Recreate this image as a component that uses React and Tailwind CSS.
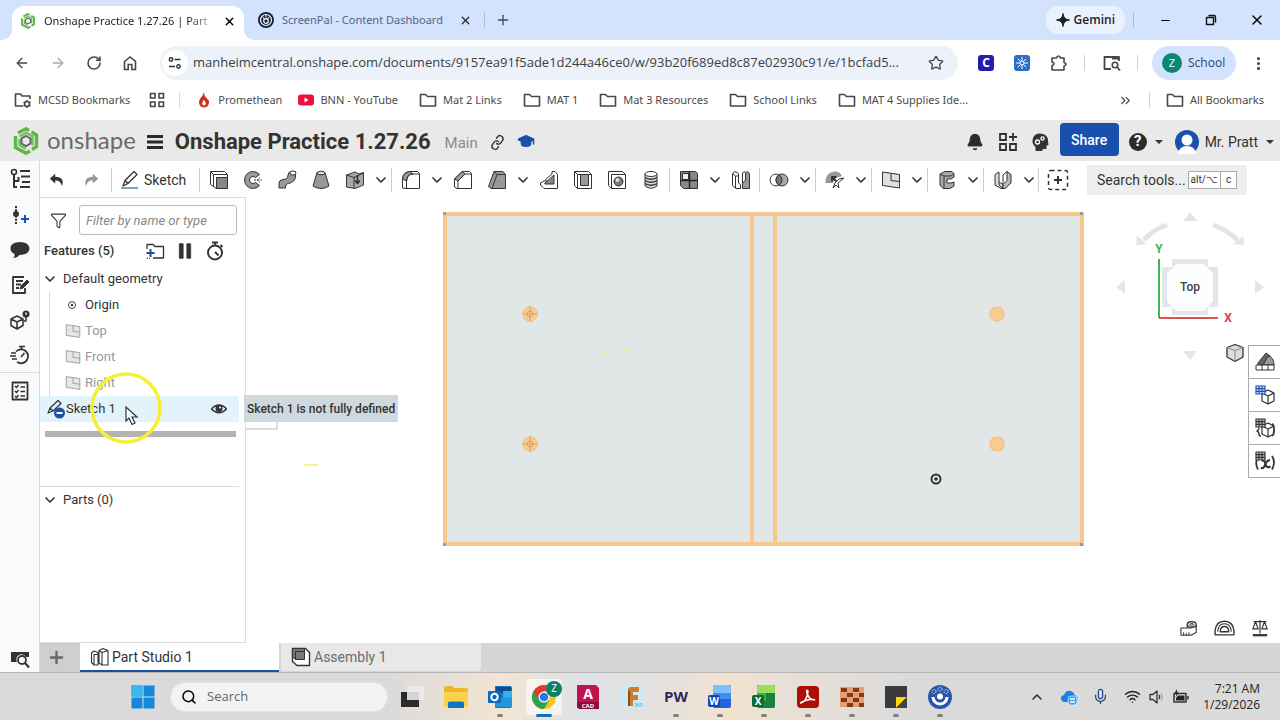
import { ArrowLeft, ArrowRight, RotateCw, Star, Plus, X, Minus, Search, Pause, ChevronDown, ChevronUp, Mic, Wifi, Link, Bell, EllipsisVertical, ChevronsRight, GraduationCap, Funnel } from "lucide-react";

const INK = "#333";

const Svg = ({ box = 20, className = "size-5", children }) => (
  <svg viewBox={`0 0 ${box} ${box}`} className={`shrink-0 ${className}`} fill="none" stroke={INK} strokeLinejoin="round" aria-hidden="true">
    {children}
  </svg>
);

const OnshapeMark = ({ className }) => (
  <svg viewBox="0 0 26 28" className={`shrink-0 ${className}`} fill="none" aria-hidden="true">
    <path d="M5 6 13 1.800 16 3.500M18.500 5 23.500 8V19.500L19 22.500" stroke="#5fb546" strokeWidth="3.400" />
    <path d="M2.500 9V20.500L13 26.200 17 24" stroke="#5fb546" strokeWidth="3.400" />
    <path d="M6.500 9.500 13 5.800 19.500 9.500V18.500M6.500 12V18L13 22" stroke="#74c25c" strokeWidth="2.400" />
    <path d="M13 9 17.500 11.500V16.500L13 19 8.500 16.500V11.500Z" stroke="#666" strokeWidth="2" />
  </svg>
);

const FolderIcon = () => (
  <Svg box={18} className="size-[18px]">
    <path d="M1.500 3.500h5l2 2h8v9.500h-15z" stroke="#474747" strokeWidth="1.600" />
  </Svg>
);

const GridIcon = () => (
  <Svg box={16} className="size-4">
    <path d="M1.500 1.500h4.500v4.500h-4.500zM10 1.500h4.500v4.500h-4.500zM1.500 10h4.500v4.500h-4.500zM10 10h4.500v4.500h-4.500z" stroke="#474747" strokeWidth="1.600" strokeLinejoin="miter" />
  </Svg>
);

const ScreenPalMark = () => (
  <Svg box={16} className="size-4">
    <circle cx="8" cy="8" r="8" fill="#15233f" stroke="none" />
    <circle cx="8" cy="8" r="5.500" stroke="#fff" strokeWidth="1.200" />
    <circle cx="8" cy="9" r="2.300" stroke="#fff" strokeWidth="1.200" />
    <path d="M8 2.500v3M4.500 4.500 6.300 7M11.500 4.500 9.700 7" stroke="#fff" />
  </Svg>
);

const PlaneIcon = ({ className = "size-5", muted }) => (
  <Svg className={className}>
    <g stroke={muted ? "#999" : INK} strokeWidth="1.100">
      <path d="M1.500 2 18.500 4.500V18L1.500 15.500Z" fill="#e6e6e6" />
      <path d="M10 3.500V10.500L18.500 11.500" fill="none" />
    </g>
  </Svg>
);

const TabStrip = () => (
  <div className="flex h-10 items-end bg-[#d3e3fd] font-[Noto_Sans,sans-serif] text-[11px]">
    <svg viewBox="0 0 12 12" className="size-3 shrink-0" aria-hidden="true"><path d="M0 12Q12 12 12 0V12Z" fill="#fff" /></svg>
    <div className="flex h-[34px] w-[232px] items-center rounded-t-xl bg-white pb-1 pl-2 pr-1">
      <OnshapeMark className="h-4 w-4" />
      <span className="ml-2 whitespace-nowrap text-[#1f1f1f] [mask-image:linear-gradient(90deg,#000_88%,#0006)]">Onshape Practice 1.27.26 | Part</span>
      <button aria-label="Close tab" className="ml-auto p-1"><X size={13} strokeWidth={2.5} /></button>
    </div>
    <svg viewBox="0 0 12 12" className="size-3 shrink-0" aria-hidden="true"><path d="M12 12Q0 12 0 0V12Z" fill="#fff" /></svg>
    <div className="flex h-10 w-[220px] items-center pl-0.5">
      <ScreenPalMark />
      <span className="ml-2 whitespace-nowrap text-[#55657f]">ScreenPal - Content Dashboard</span>
      <button aria-label="Close tab" className="ml-auto p-1 text-[#333]"><X size={13} strokeWidth={2.5} /></button>
    </div>
    <div className="mb-3 ml-2 h-4 w-px bg-[#a8bfe0]" />
    <button aria-label="New tab" className="mb-3 ml-2.5 text-[#3b4a5f]"><Plus size={16} /></button>
    <div className="ml-auto flex h-10 items-center">
      <button className="flex h-7 items-center gap-1 rounded-xl bg-[#e9f1fe] px-2.5 font-[Open_Sans,sans-serif] text-xs font-semibold text-[#1f1f1f]">
        <Svg box={14} className="size-3.5"><path d="M7 0.500Q7.500 6.500 13.500 7 7.500 7.500 7 13.500 6.500 7.500 0.500 7 6.500 6.500 7 0.500Z" fill="#1f1f1f" stroke="#1f1f1f" /></Svg>
        Gemini
      </button>
      <div className="ml-2 mr-2 h-4 w-px bg-[#a8bfe0]" />
      <button aria-label="Minimize" className="flex w-[46px] justify-center"><Minus size={13} strokeWidth={2} /></button>
      <button aria-label="Restore" className="flex w-[46px] justify-center">
        <Svg box={12} className="size-3"><path d="M1.500 3.500h7v7h-7zM3.500 1.500H9Q10.500 1.500 10.500 3V8.500" stroke="#111" strokeWidth="1.400" /></Svg>
      </button>
      <button aria-label="Close" className="flex w-[46px] justify-center"><X size={16} strokeWidth={2} /></button>
    </div>
  </div>
);

const AddressBar = () => (
  <div className="flex h-[46px] items-center bg-white pl-3.5 pr-[13px] text-[#474747]">
    <div className="flex w-[146px] items-center gap-5">
      <button aria-label="Back"><ArrowLeft size={16} strokeWidth={2} /></button>
      <button aria-label="Forward" className="text-[#aaa]"><ArrowRight size={16} strokeWidth={2} /></button>
      <button aria-label="Reload"><RotateCw size={16} strokeWidth={2.300} /></button>
      <button aria-label="Home">
        <Svg box={16} className="size-4"><path d="M2.500 6.500 8 2 13.500 6.500V14.500H9.800V9.500H6.200V14.500H2.500Z" stroke="#474747" strokeWidth="1.600" strokeLinejoin="miter" /></Svg>
      </button>
    </div>
    <div className="flex h-[34px] flex-1 items-center rounded-full bg-[#edf2fa] pl-0.5 pr-3.5">
      <button aria-label="Site information" className="flex size-[26px] items-center justify-center rounded-full bg-white">
        <Svg box={14} className="size-3.5"><path d="M6.500 3.500h6M1 10.500h6" stroke="#333" strokeWidth="1.500" /><circle cx="3" cy="3.500" r="1.700" stroke="#333" strokeWidth="1.400" /><circle cx="10.500" cy="10.500" r="1.700" stroke="#333" strokeWidth="1.400" /></Svg>
      </button>
      <input aria-label="Address" className="ml-[5px] min-w-0 flex-1 bg-transparent text-[13px] text-[#3c4043] outline-none" defaultValue="manheimcentral.onshape.com/documents/9157ea91f5ade1d244a46ce0/w/93b20f689ed8c87e02930c91/e/1bcfad5..." />
      <button aria-label="Bookmark this page"><Star size={16} strokeWidth={2} /></button>
    </div>
    <div className="ml-5 flex items-center">
      <button aria-label="Clever" className="flex size-4 items-center justify-center rounded-[3px] bg-[#2a1bb0] text-xs font-bold text-white">C</button>
      <button aria-label="Extension" className="ml-5 flex size-4 items-center justify-center rounded-[3px] bg-[#2b6fce]">
        <Svg box={14} className="size-3.5"><path d="M7 1v12M1 7h12M2.800 2.800l8.400 8.400M11.200 2.800l-8.400 8.400" stroke="#fff" /><circle cx="7" cy="7" r="2" fill="#2b6fce" stroke="#fff" /></Svg>
      </button>
      <button aria-label="Extensions" className="ml-5">
        <Svg box={18} className="size-[18px]"><path d="M2 4h4.500q.5-2 2-2t2 2H14v4.500q2 .5 2 1.800t-2 1.700V16H2v-4.500q2-.5 2-1.700T2 8Z" stroke="#474747" strokeWidth="1.600" /></Svg>
      </button>
      <div className="ml-4 h-4 w-px bg-[#c7d3ea]" />
      <button aria-label="Search side panel" className="ml-[18px]">
        <Svg box={18} className="size-[18px]"><path d="M8 15H1.500V3H16V7M9 4.500h7" stroke="#474747" strokeWidth="1.800" /><circle cx="12" cy="11" r="2.800" stroke="#474747" strokeWidth="1.600" /><path d="m14 13 3 3.500" stroke="#474747" strokeWidth="1.800" /></Svg>
      </button>
      <div className="ml-4 h-4 w-px bg-[#c7d3ea]" />
      <button className="ml-3.5 flex h-[34px] w-[84px] items-center gap-1.5 rounded-full bg-[#d3e3fd] pl-2.5 text-xs text-[#2f4468]">
        <span className="flex size-5 items-center justify-center rounded-full bg-[#0a8576] text-[11px] text-white">Z</span>
        School
      </button>
      <button aria-label="Menu" className="ml-3.5"><EllipsisVertical size={17} strokeWidth={2.500} /></button>
    </div>
  </div>
);

const BOOKMARKS = ["Mat 2 Links", "MAT 1", "Mat 3 Resources", "School Links", "MAT 4 Supplies Ide..."];

const BookmarksBar = () => (
  <div className="flex h-[34px] items-center whitespace-nowrap bg-white pb-1.5 pl-3.5 pr-4 font-[Noto_Sans,sans-serif] text-[11px] text-[#4a4a4a]">
    <a href="#" className="flex items-center gap-1.5">
      <Svg box={18} className="size-[18px]"><path d="M9 15H1.500V3H6.500L8 5H16V8" stroke="#474747" strokeWidth="1.600" /><circle cx="13" cy="13" r="2.500" stroke="#474747" strokeWidth="1.600" /><path d="M13 9v8M9.500 11l7 4M16.500 11l-7 4" stroke="#474747" strokeDasharray="1.600 5" strokeWidth="1.400" /></Svg>
      MCSD Bookmarks
    </a>
    <button aria-label="Apps" className="ml-[19px]"><GridIcon /></button>
    <div className="ml-3.5 h-4 w-px bg-[#d5dbe6]" />
    <a href="#" className="ml-4 flex items-center gap-1.5">
      <Svg box={16} className="size-4"><path d="M8 0Q8 4 10.500 6 13.500 8.500 13 11 12 15.500 8 15.500T3 11Q2.500 8 5 5.500 7.500 3 8 0Z" fill="#c93320" stroke="none" /><path d="M8 8Q10 10 9.800 11.500 9.500 13.500 8 13.500T6.200 11.500Q6 10 8 8Z" fill="#fff" stroke="none" /></Svg>
      Promethean
    </a>
    <a href="#" className="ml-4 flex items-center gap-1.5">
      <Svg box={16} className="size-4"><rect x="0" y="2.500" width="16" height="11" rx="3" fill="#f0103c" stroke="none" /><path d="M6.500 5.500v5l4-2.500z" fill="#fff" stroke="none" /></Svg>
      BNN - YouTube
    </a>
    {BOOKMARKS.map(name => (
      <a key={name} href="#" className="ml-[21px] flex items-center gap-1.5"><FolderIcon />{name}</a>
    ))}
    <button aria-label="More bookmarks" className="ml-auto mr-4"><ChevronsRight size={15} /></button>
    <div className="mr-4 h-4 w-px bg-[#c7d3ea]" />
    <a href="#" className="flex items-center gap-1.5"><FolderIcon />All Bookmarks</a>
  </div>
);

const Caret = () => <Svg box={8} className="size-2"><path d="M0 2h8L4 6z" fill="#333" stroke="none" /></Svg>;

const AppHeader = () => (
  <header className="flex h-[41px] items-center bg-[#e9e9e9] pl-[13px] pr-1.5 font-[Roboto,sans-serif] text-[#333]">
    <OnshapeMark className="h-7 w-[26px]" />
    <span className="ml-2 pb-0.5 font-[Lato,sans-serif] text-2xl leading-7 text-[#6a6a6a]">onshape</span>
    <button aria-label="Main menu" className="ml-2.5 pt-0.5">
      <Svg box={18} className="size-[18px]"><path d="M1 3.500h16M1 9h16M1 14.500h16" stroke="#2b2b2b" strokeWidth="2.800" /></Svg>
    </button>
    <h1 className="ml-[11px] pt-0.5 text-[22px] font-bold leading-7">Onshape Practice 1.27.26</h1>
    <span className="ml-3.5 pt-1.5 text-[15px] text-[#8c8c8c]">Main</span>
    <button aria-label="Copy link" className="ml-3 pt-1"><Link size={15} className="-rotate-12" strokeWidth={2.200} /></button>
    <button aria-label="Learning center" className="ml-3 text-[#1b4fa8]"><GraduationCap size={18} fill="currentColor" /></button>
    <div className="ml-auto flex items-center pt-0.5">
      <button aria-label="Notifications"><Bell size={18} fill="#2b2b2b" /></button>
      <button aria-label="App store" className="ml-3.5">
        <Svg className="size-5"><path d="M2 2h6v6H2zM2 12h6v6H2zM12 12h6v6h-6zM15 1v8M11 5h8" strokeWidth="1.800" strokeLinejoin="miter" /></Svg>
      </button>
      <button aria-label="AI advisor" className="ml-3">
        <Svg className="size-5"><path d="M9.500 1.500Q18 1.500 18 9l.5 4-2 .5V17H13l-1 2H5.500V15Q2 12 2.500 8 3.500 1.500 9.500 1.500Z" fill="#333" stroke="none" /><circle cx="7.500" cy="10" r="2" stroke="#fff" strokeWidth="1.300" /><circle cx="12.500" cy="6.500" r="1.600" stroke="#fff" strokeWidth="1.300" /></Svg>
      </button>
      <button className="mb-1 ml-2.5 h-[33px] w-[59px] rounded bg-[#1a50ad] text-sm font-medium text-white">Share</button>
      <button aria-label="Help" className="ml-2.5 flex items-center gap-2">
        <span className="flex size-[18px] items-center justify-center rounded-full bg-[#2b2b2b] text-[15px] font-bold text-white">?</span>
        <Caret />
      </button>
      <button className="ml-3 flex items-center gap-1.5 text-sm">
        <Svg box={24} className="size-6"><circle cx="12" cy="12" r="12" fill="#1b50ad" stroke="none" /><circle cx="12" cy="10" r="5.500" fill="#fff" stroke="none" /><path d="M3 24Q4 16 12 16t9 8Z" fill="#fff" stroke="none" /></Svg>
        <span className="mr-0.5">Mr. Pratt</span>
        <Caret />
      </button>
    </div>
  </header>
);

const TOOL_ART = {
  Extrude: <><path d="M1.500 1.500h14l3 3v14h-11l-6-4z" fill="#fff" /><path d="M4.500 16V4.500H18M4.500 4.500l-3-3" /><path d="M7.500 7.500h11v11h-11z" fill="#888" /></>,
  Revolve: <><path d="M16.500 4.500A8.500 8.500 0 1 0 16.500 15.500L12.500 12.500A3.500 3.500 0 1 1 12.500 7.500Z" fill="#999" /><path d="M11 10h8M17 7.500 14 10l3 2.500" strokeDasharray="2 1.200" /></>,
  Sweep: <><path d="M2 18v-5q0-3 4-3.500 5 0 5-4.500 0-3 3.500-3.500h4V6q0 6-7 7.500-3 0-3 4.500z" fill="#999" /><ellipse cx="16" cy="3" rx="3" ry="2" fill="#fff" /></>,
  Loft: <><path d="M6 2.500h8l4 13.500q-8 5-16 0z" fill="#999" /><ellipse cx="10" cy="3" rx="4" ry="1.800" fill="#ddd" /></>,
  Thicken: <><path d="M1.500 5 10 2l4 2 4.500-1.500V15L10 18.500 1.500 17z" fill="#aaa" /><path d="M1.500 5 9 7.500 18.500 3M9 7.500V18" /><path d="M12.500 5v8M10 10.500l2.500 3 2.500-3" strokeWidth="1.600" /></>,
  Fillet: <><path d="M1.500 18V9Q2 2 9 1.500h7.500l2 2v15H5z" fill="#fff" /><path d="M1.500 9Q2 2 9 1.500l3 2.500Q6 4 5.500 11z" fill="#999" /><path d="M5.500 18.500V11Q6 4 12 4h6.500" /></>,
  Chamfer: <><path d="M1.500 17V9L9 1.500h7.500l2 2v15H4z" fill="#fff" /><path d="M1.500 9 9 1.500l3 2.500-7 7z" fill="#999" /><path d="M5 18.500V11l7-7h6.500" /></>,
  Draft: <><path d="M1.500 16.500 7 1.500h9l2.500 3v14H4z" fill="#999" /><path d="m5 18.500 5-14h8.500M10 4.500 7 1.500" /></>,
  Rib: <><path d="M1.500 13 5 11h2V9l6-5V1.500h3l2.500 3v14H5L1.500 15z" fill="#fff" /><path d="M5.500 13.500 15 5v9H6z" fill="#888" /></>,
  Shell: <><path d="M1.500 1.500h14l3 3v14h-14l-3-3z" fill="#fff" /><path d="M4.500 18.500V4.500h14M4.500 4.500l-3-3" /><path d="M7.500 4.500h8v11h-8z" fill="#999" /></>,
  Hole: <><path d="M1.500 1.500h14l3 3v14h-14l-3-3z" fill="#fff" /><path d="M4.500 18.500V4.500h14" /><circle cx="11.500" cy="11.500" r="4.500" fill="#777" /><circle cx="10.500" cy="10" r="2" fill="#ddd" stroke="none" /></>,
  Thread: <><path d="M4 4v12q6 4.500 12 0V4z" fill="#ddd" /><ellipse cx="10" cy="4" rx="6" ry="2.500" fill="#fff" /><path d="M4 7.500q6 3.500 12 0M4 10.500q6 3.500 12 0M4 13.500q6 3.500 12 0" strokeWidth="1.400" /></>,
  Pattern: <><path d="M1.500 1.500h15l2 2v15h-14l-3-3z" fill="#888" /><path d="M3.500 3.500h6v6h-6z" fill="#eee" /><path d="M10.500 1.500v17M1.500 10.500h17" stroke="#222" strokeWidth="1.400" /></>,
  Mirror: <><path d="M1.500 3.500 4 1.500l3.500 2V13l2 1.500v4H5l-3.500-3z" fill="#fff" /><path d="M4.500 18V6L1.500 3.500M4.500 6h3" /><path d="M18.500 3.500 16 1.500l-1.500 2V10l-3 3.500v5h7z" fill="#999" /><path d="M11.500 13.500V3l2-1.500 1 2" /></>,
  Boolean: <><circle cx="7" cy="10" r="6" fill="#fff" /><circle cx="13" cy="10" r="6" fill="#aaa" /><path d="M10 4.800a6 6 0 0 1 0 10.400 6 6 0 0 1 0-10.400z" fill="#777" /></>,
  Split: <><path d="M.5 13Q0 3 9 1.500q6-.5 8 5-6-1-9.500 6.500z" fill="#999" stroke="none" /><path d="m7 7 5 5M11.500 7H7v4.500" strokeWidth="1.800" /><path d="m10 13 4-4 5-1-6 5 1 5-3-3-3 3z" fill="#fff" /></>,
  Plane: <><path d="M1.500 2 18.500 4.500V18L1.500 15.500Z" fill="#e0e0e0" /><path d="M10 3.500V10.500L18.500 11.500" /></>,
  Frame: <><path d="m3 4 5-2.500h7l2 2V7l-3 2h-4v4h4l3-1v4l-4 2.500H6L3 15z" fill="#aaa" /><path d="m3 4 4 2h7l3-2.500M7 6v12" /></>,
  "Sheet metal": <><path d="M2 4.500 6 2v10l4 2.500v4H8L2 15z" fill="#ddd" /><path d="m10 14.500 4-4V1.500l4 3V13l-6 5.500h-2z" fill="#bbb" /><path d="M6 12v3l4 3.500M10 14.500V5l4-3.500" /></>,
};

const TOOL_GROUPS = [
  ["Extrude", "Revolve", "Sweep", "Loft", "Thicken", "v"],
  ["Fillet", "v", "Chamfer", "Draft", "v", "Rib", "Shell", "Hole", "Thread"],
  ["Pattern", "v", "Mirror"],
  ["Boolean", "v"],
  ["Split", "v"],
  ["Plane", "v"],
  ["Frame", "v"],
  ["Sheet metal", "v"],
];

const Toolbar = () => (
  <div className="flex h-9 shrink-0 items-center bg-white pl-2 pt-px text-[#333]">
    <button aria-label="Undo" className="w-[34px]"><Svg className="size-[18px]"><path d="M8 3 2 8.500 8 14V10.500Q14 10 15.500 17 19 7 8 6.500Z" fill="#333" stroke="none" /></Svg></button>
    <button aria-label="Redo" className="w-[29px]"><Svg className="size-[18px]"><path d="M12 3l6 5.500L12 14V10.500Q6 10 4.500 17 1 7 12 6.500Z" fill="#999" stroke="none" /></Svg></button>
    <div className="h-6 w-px bg-[#d0d0d0]" />
    <button className="ml-2 flex w-[78px] items-center gap-1 text-sm">
      <Svg><path d="M3 16 5 10.500 14 1.500l3 3L8 13.500zM5 10.500l3 3" strokeWidth="1.300" /><path d="M1 18h17" stroke="#3d81a6" strokeWidth="1.400" /></Svg>
      Sketch
    </button>
    {TOOL_GROUPS.map(group => (
      <div key={group[0]} className="flex items-center">
        <div className="mr-0.5 ml-px h-6 w-px bg-[#d0d0d0]" />
        {group.map((tool, i) => tool === "v" ? (
          <button key={i} aria-label={`More ${group[i - 1]} tools`} className="flex w-[18px] justify-center"><ChevronDown size={16} strokeWidth={2.500} /></button>
        ) : (
          <button key={i} aria-label={tool} className="flex w-[34px] justify-center"><Svg>{TOOL_ART[tool]}</Svg></button>
        ))}
      </div>
    ))}
    <div className="h-6 w-px bg-[#d0d0d0]" />
    <button aria-label="Add custom features" className="ml-2">
      <Svg box={22} className="size-[22px]"><rect x="1.500" y="1.500" width="19" height="19" rx="2" strokeDasharray="4 3" strokeWidth="1.500" /><path d="M11 7v8M7 11h8" strokeWidth="2" /></Svg>
    </button>
    <button className="ml-[18px] flex h-[30px] items-center bg-[#eee] px-2.5 text-sm whitespace-nowrap">
      Search tools...
      <kbd className="ml-0.5 border border-[#aaa] bg-white px-0.5 font-[Roboto,sans-serif] text-[10px] leading-4">alt/⌥</kbd>
      <kbd className="border border-l-0 border-[#aaa] bg-white px-[5px] font-[Roboto,sans-serif] text-[10px] leading-4">c</kbd>
    </button>
  </div>
);

const LeftRail = () => (
  <nav className="flex w-10 shrink-0 flex-col items-center border-r border-[#d8d8d8] bg-[#f8fafb]">
    <button aria-label="Feature list" className="flex h-9 items-center"><Svg box={22} className="size-[22px]"><circle cx="5" cy="4" r="2.500" strokeWidth="1.600" /><path d="M5 6.500V19h3M5 13h4.500V9" strokeWidth="2" /><path d="M11 3h10M12 8.500h9M13 14h8M11 19h10" strokeWidth="2.200" /></Svg></button>
    <button aria-label="Add variable" className="flex h-9 items-center"><Svg><path d="M6 1v18" strokeDasharray="2 1.200" strokeWidth="2" /><circle cx="6" cy="9" r="3" fill="#333" stroke="none" /><path d="M15 10v8M11 14h8" stroke="#1b50ad" strokeWidth="2" /></Svg></button>
    <button aria-label="Comments" className="flex h-[34px] items-center"><Svg><path d="M10 2c5.500 0 9.500 2.800 9.500 6.500S15.500 15 9.500 15Q7 18 3 18 5 16.500 4.500 14 .5 12 .5 8.500.5 2 10 2Z" fill="#333" stroke="none" /></Svg></button>
    <button aria-label="Notes" className="flex h-[35px] items-center"><Svg><path d="M14 2H3v16h12v-5M6 6h7M6 9.500h5M6 13h3" strokeWidth="1.800" /><path d="m10 14 1-3 6-6 2 2-6 6z" fill="#333" /></Svg></button>
    <button aria-label="Part help" className="flex h-[35px] items-center"><Svg><path d="M7 6 13 9v6.500L7 19 1 15.500V9ZM1 9l6 3 6-3M7 12v7" strokeWidth="1.500" /><circle cx="16" cy="4" r="3.500" fill="#333" stroke="none" /><path d="M15 3.500q1.500-1.500 1.500 0L16 5" stroke="#fff" /><path d="M16 7v4h-2" strokeWidth="1.500" /></Svg></button>
    <button aria-label="Performance" className="flex h-[35px] items-center"><Svg><path d="M6 6.500A7 7 0 1 1 7 17" strokeWidth="1.800" /><path d="M9 1.500h6M11.500 2v2.500M11 12l3.500-4M0 11h6M1 8h5M2 14h5" strokeWidth="1.700" /></Svg></button>
    <div className="h-px w-full bg-[#d8d8d8]" />
    <button aria-label="Checklist" className="flex h-[35px] items-center"><Svg><path d="M2.500 1.500h15v17h-15z" strokeWidth="1.800" /><path d="m5 5 1.500 1.500L8.500 4M5 10l1.500 1.500L8.500 9M5 15l1.500 1.500 2-2.500M10.500 6H15M10.500 10.500H15M10.500 15H15" strokeWidth="1.500" /></Svg></button>
    <button aria-label="Find" className="mb-[3px] mt-auto"><Svg><path d="M1 3h18v5h-3a5 5 0 0 0-9 5H1z" fill="#333" stroke="none" /><circle cx="12" cy="11" r="4" fill="#f8fafb" strokeWidth="1.800" /><path d="m15 14 4 4.500" strokeWidth="2.200" /></Svg></button>
  </nav>
);

const FeaturePanel = () => (
  <aside className="relative w-[206px] shrink-0 border border-l-0 border-[#dcdcdc] bg-white text-[13px] text-[#333]">
    <div className="flex h-[38px] items-center pl-2.5 pr-2 pt-1.5">
      <button aria-label="Filter" className="mr-3"><Funnel size={17} strokeWidth={1.500} /></button>
      <input aria-label="Filter features" placeholder="Filter by name or type" className="h-[30px] w-full min-w-0 rounded-[3px] border border-[#bbb] px-1.5 text-[13px] italic outline-none placeholder:text-[#888]" />
    </div>
    <div className="flex h-[30px] items-center pl-1">
      <h2 className="w-[74px] font-medium">Features (5)</h2>
      <button aria-label="Add folder" className="ml-[27px]"><Svg><path d="M2 8V3.500h6l2 2h8.500V17H8" strokeWidth="1.300" /><path d="M2 16.500v1h3" strokeDasharray="1.500 1.500" /><path d="M5.500 8v8M1.500 12h8" stroke="#1b50ad" strokeWidth="2" /></Svg></button>
      <button aria-label="Suspend regeneration" className="ml-2.5"><Pause size={20} fill="#333" strokeWidth={0.500} /></button>
      <button aria-label="Regeneration times" className="ml-2.5"><Svg><circle cx="10" cy="11.500" r="7" strokeWidth="1.900" /><path d="M7 1.500h6M10 2v2.500M10 11l3.500 3.500M15.500 4l2 2" strokeWidth="1.800" /></Svg></button>
    </div>
    <button className="flex h-[26px] items-center gap-[5px] pl-0.5"><ChevronDown size={16} strokeWidth={2.500} />Default geometry</button>
    <ul className="ml-[9px] border-l border-[#d8d8d8]">
      <li className="flex h-[26px] items-center gap-2 pl-[17px]">
        <Svg box={10} className="size-2.5"><circle cx="5" cy="5" r="3.500" strokeWidth=".9" /><circle cx="5" cy="5" r="1.200" fill="#333" stroke="none" /></Svg>
        Origin
      </li>
      {["Top", "Front", "Right"].map(name => (
        <li key={name} className="flex h-[26px] items-center gap-1 pl-[15px] text-[#999]"><PlaneIcon className="size-4" muted />{name}</li>
      ))}
    </ul>
    <div className="mr-1.5 flex h-[26px] items-center bg-[#e2f3fb] pl-1.5 pr-3">
      <Svg className="size-5"><path d="M2 14 4 9 12 1.500l3 3L7 12zM4 9l3 3" strokeWidth="1.200" /><circle cx="13.500" cy="14" r="5.500" fill="#1b50ad" stroke="none" /><path d="M10.500 14h6" stroke="#fff" strokeWidth="2" /></Svg>
      Sketch 1
      <button aria-label="Hide Sketch 1" className="ml-auto"><Svg box={16} className="size-4"><path d="M0.500 8Q8 0 15.500 8 8 15.500 .5 8Z" strokeWidth="1.400" /><circle cx="8" cy="7.500" r="3.500" fill="#333" stroke="none" /><circle cx="9" cy="6.500" r="1" fill="#fff" stroke="none" /></Svg></button>
    </div>
    <div className="ml-[5px] mr-[9px] mt-[9px] h-1.5 bg-[#b3b3b3]" />
    <div className="mr-1.5 mt-[49px] border-t border-[#dcdcdc]">
      <button className="flex h-[26px] items-center gap-[5px] pl-0.5"><ChevronDown size={16} strokeWidth={2.500} />Parts (0)</button>
    </div>
    <div role="tooltip" className="absolute left-[204px] top-[197px] z-10 flex h-[27px] items-center whitespace-nowrap bg-[#cfd8dc] px-[3px] text-xs font-medium">Sketch 1 is not fully defined</div>
    <svg viewBox="0 0 76 76" className="absolute left-[48px] top-[172px] z-20 size-[76px]" fill="none" aria-hidden="true">
      <circle cx="38" cy="38" r="34" stroke="#f4f032" strokeWidth="3.500" />
      <path d="M38 37v14l3-3 3 6.500 3-1.500-3-6h5z" fill="#fff" stroke="#333" strokeWidth="1.200" />
    </svg>
  </aside>
);

const HOLES = [[284, 117], [284, 247], [751, 117], [751, 247]];

const SketchDrawing = () => (
  <svg className="absolute inset-0 size-full" fill="none" aria-hidden="true">
    <rect x="199" y="17" width="637" height="330" fill="#e1e6e7" stroke="#f5c88c" strokeWidth="4" />
    <path d="M506 17V347M529 17V347" stroke="#f5c88c" strokeWidth="4" />
    <path d="M197 15h3v3h-3zM834 15h3v3h-3zM197 346h3v3h-3zM834 346h3v3h-3z" fill="#999" />
    {HOLES.map(([x, y], i) => (
      <g key={i}>
        <circle cx={x} cy={y} r="7" fill="#f8cd92" stroke="#f3c58a" strokeWidth="1.500" />
        {x < 400 && <path d={`M${x - 8} ${y}h16M${x} ${y - 8}v16`} stroke="#d3a468" />}
        {x < 400 && <circle cx={x} cy={y} r="3" stroke="#d9a25e" />}
      </g>
    ))}
    <circle cx="690" cy="282" r="4.500" stroke="#333" strokeWidth="2" />
    <circle cx="690" cy="282" r="1.800" fill="#333" />
    <path d="M0 232h31v-7" stroke="#bbb" />
    <path d="M58 268h14" stroke="#f7f58a" strokeWidth="2" />
    <path d="M358 155h5M378 153h5" stroke="#eeee9c" strokeWidth="2" />
  </svg>
);

const ViewCube = () => (
  <svg viewBox="0 0 160 160" className="absolute right-[10px] top-[9px] size-40" fill="none" aria-hidden="true">
    <path d="m73 15 7-9 7 9zM73 145l7 9 7-9zM15 74v14l-9-7zM145 74v14l9-7z" fill="#e3e5e8" />
    <path d="M57 19Q42 24 34 34M103 19q15 5 24 15" stroke="#e1e5e9" strokeWidth="5" />
    <path d="m27 30 10 8-11 1zM133 30l-10 8 11 1z" fill="#e1e5e9" />
    <path d="M62 53h36v8h10v40H98v8H62v-8H52V61h10z" fill="#e3e7ec" />
    <path d="M67 59h26l9 9v27l-9 9H67l-9-9V68z" fill="#fdfefe" stroke="#fdfefe" strokeWidth="2" strokeLinejoin="round" />
    <path d="M49 53v59" stroke="#3fb54a" strokeWidth="2" />
    <path d="M49 112h59" stroke="#e0504f" strokeWidth="2" />
    <text x="80" y="85" textAnchor="middle" fill="#444" className="text-xs font-medium">Top</text>
    <text x="49" y="47" textAnchor="middle" fill="#3fb54a" className="text-xs font-bold">Y</text>
    <text x="118" y="116" textAnchor="middle" fill="#d8434a" className="text-xs font-bold">X</text>
  </svg>
);

const TABLE = <path d="M1 1h9v8H1zM4 1v8M7 1v8M1 3.700h9M1 6.300h9" strokeWidth="1.200" />;
const CUBE = <path d="m7 8 6-3 6 3v8l-6 3-6-3zM7 8l6 3 6-3M13 11v8" fill="#fff" strokeWidth="1.200" />;

const SIDE_PANELS = [
  ["Appearances", <><path d="M3 11 11 1l4 3-3 9H3z" fill="#666" /><path d="m8 13 5-9q6 1 6 9z" fill="#999" /><path d="M1 13h18v5H1z" fill="#fff" /><path d="M7 13v5M13 13v5" /></>],
  ["Configurations", <>{CUBE}<g stroke="#1b50ad" fill="#dbe7fa">{TABLE}</g></>],
  ["Custom tables", <>{CUBE}<g fill="#ccc">{TABLE}</g><path d="M4 10q0 2-2 3 2 1 2 3t2 2M17 6q2 0 1.500 3 0 2 1.500 3-2 1-1.500 3t-1.500 3" strokeWidth="1.400" /></>],
  ["Variables", <><path d="M2 8.500Q0 13 3 18.500M17 5q4 6 0 13.500" strokeWidth="1.800" /><path d="M6 16.500q2.500 2 4-2.500t5-5M7 10q2.500-1.500 3.500 3t5 2.500" strokeWidth="2.200" /><g fill="#ccc">{TABLE}</g></>],
];

const Canvas = () => (
  <main className="relative min-w-0 flex-1 bg-white">
    <SketchDrawing />
    <ViewCube />
    <button aria-label="View options" className="absolute right-[35px] top-[146px]"><Svg className="size-5"><path d="M10 1.500 18 4.500V14L10 18.500 2 14V4.500Z" fill="#ddd" strokeWidth="1.300" /><path d="m2 4.500 8 3 8-3M10 7.500v11" stroke="#888" /></Svg></button>
    <div className="absolute right-0 top-[148px] flex w-8 flex-col border-t border-l border-[#aaa] bg-white">
      {SIDE_PANELS.map(([label, art]) => (
        <button key={label} aria-label={label} className="flex h-[33px] items-center justify-center border-b border-[#aaa]"><Svg>{art}</Svg></button>
      ))}
    </div>
    <div className="absolute bottom-[5px] right-[11px] flex items-center gap-4">
      <button aria-label="Measure"><Svg className="size-[18px]"><path d="M1 10h11l6-2v7l-6 3H1zM4 18v-3M7 18v-2.500M10 18v-3" strokeWidth="1.200" /><path d="M8 6v4M18 6v3" strokeWidth="1.200" /><ellipse cx="13" cy="6" rx="5" ry="3" fill="#ddd" strokeWidth="1.300" /><ellipse cx="13" cy="6" rx="2" ry="1" /></Svg></button>
      <button aria-label="Protractor"><Svg className="size-[21px]"><path d="M1 17V13Q2 4 10 4t9 9v4zM6 14q0-5 4-5t4 5z" strokeWidth="1.300" /><path d="M3.500 14Q4 6.500 10 6.500T16.500 14" /></Svg></button>
      <button aria-label="Mass properties"><Svg className="size-[18px]"><path d="M10 1v15M3 3h14M5 3 2 11h6L5 3M15 3l-3 8h6l-3-8" strokeWidth="1.300" /><path d="M2 18h16" strokeWidth="2.500" /></Svg></button>
    </div>
  </main>
);

const StudioTabs = () => (
  <div className="flex h-[29px] shrink-0 bg-[#d6d6d6] text-sm text-[#333]">
    <button aria-label="Insert new element" className="flex w-10 items-center justify-center bg-[#cfcfcf] pr-2"><Plus size={19} strokeWidth={3} className="text-[#666]" /></button>
    <button className="flex w-[199px] items-center gap-0.5 border-b-2 border-[#1b50ad] bg-white pl-2.5">
      <Svg><path d="M1.500 6 4 4l4 1.500V18H4l-2.500-2.500zM9 3.500l4-2 5 2V18h-6l-3-2zM4 18V7.500h4M12 18V5.500l6-2M12 5.500l-3-2" strokeWidth="1.100" /></Svg>
      Part Studio 1
    </button>
    <button className="ml-0.5 flex h-7 w-[200px] items-center gap-[3px] rounded-b bg-[#e8e8e8] pl-2.5 text-[#6d6d6d]">
      <Svg><path d="M1.500 1.500h13l4 4v13H6l-4.500-4z" fill="#fff" strokeWidth="1.400" /><path d="M1.500 1.500h12v11h-9l-3-3z" fill="#777" /><path d="M4.500 4.500v8M4.500 4.500h9" /></Svg>
      Assembly 1
    </button>
  </div>
);

const A24 = ({ children }) => <svg viewBox="0 0 24 24" className="size-6 font-[Open_Sans,sans-serif]" fill="none" aria-hidden="true">{children}</svg>;

const TASK_APPS = [
  ["Task view", false, <><path d="M1 7h18v15H1z" fill="#2b2b2b" /><path d="M7 1h17v14H7z" fill="#ededed" opacity=".88" /></>],
  ["File Explorer", false, <><path d="M0 3q0-2 2-2h6l2 2h12q2 0 2 2v15q0 2-2 2H2q-2 0-2-2z" fill="#f0b52b" /><path d="M0 7h24v13q0 2-2 2H2q-2 0-2-2z" fill="#fbd14b" /><path d="M4 18q0-1.500 1.500-1.500h13q1.500 0 1.500 1.500v5H4z" fill="#1673c4" /></>],
  ["Outlook", true, <><path d="M7 1h15q2 0 2 2v18q0 2-2 2H7z" fill="#1574c8" /><path d="M8 2h15v6H8z" fill="#0b4f91" /><path d="M15 6h9v7h-9z" fill="#35b0ec" /><path d="m7 14 17-2v10H7z" fill="#2594dc" /><rect x="0" y="6" width="13" height="12" rx="1" fill="#0f69bd" /><circle cx="6.500" cy="12" r="3.200" stroke="#fff" strokeWidth="2" /></>],
  ["Chrome", true, null],
  ["AutoCAD", false, <><path d="M1 0h19l3 3v21H3l-2-2z" fill="#c31250" /><path d="M1 17h22v7H3l-2-2z" fill="#8c0c3a" /><text x="12" y="14" textAnchor="middle" fill="#fff" fontSize="14" fontWeight="700">A</text><text x="12" y="23" textAnchor="middle" fill="#fff" fontSize="6" fontWeight="700">CAD</text></>],
  ["Fusion 360", false, <><path d="M0 0h24v23H0z" fill="#d0e9f2" /><path d="M8 21V5q0-3 3-3h8v5h-6v3h5v5h-5v6z" fill="#cd7d31" /><path d="M8 21V5l2 2v14z" fill="#8d4e18" /><text x="14" y="22" fill="#3b9acb" fontSize="5">360</text></>],
  ["PW", true, <text x="12" y="17" textAnchor="middle" fill="#332659" fontSize="15" fontWeight="700">PW</text>],
  ["Word", true, <><rect x="5" y="0" width="18" height="23" rx="2" fill="#2563d9" /><path d="M5 2q0-2 2-2h14q2 0 2 2v6H5z" fill="#7fc0fa" /><path d="M5 8h18v6H5z" fill="#3c8ef0" /><rect x="0" y="10" width="12" height="12" rx="2" fill="#1546b0" /><text x="6" y="20" textAnchor="middle" fill="#fff" fontSize="10" fontWeight="700">W</text></>],
  ["Excel", true, <><rect x="5" y="0" width="18" height="23" rx="2" fill="#16823e" /><path d="M5 2q0-2 2-2h14q2 0 2 2v6H5z" fill="#9bdd5e" /><path d="M5 8h9v8H5z" fill="#3bb14c" /><rect x="0" y="10" width="12" height="12" rx="2" fill="#0f6a37" /><text x="6" y="20" textAnchor="middle" fill="#fff" fontSize="10" fontWeight="700">X</text></>],
  ["Acrobat", true, <><rect x="1" y="1" width="22" height="22" rx="4" fill="#ad0e05" /><path d="M5 18q6-2 7-12-2-2-1 2 2 7 8 7-4-2-13 2-2 1-1 1Z" stroke="#fff" strokeWidth="1.600" /></>],
  ["Brick", true, <><path d="M0 2h24v20H0z" fill="#e3a06e" /><path d="M1 3h6v4H1zM13 3h6v4h-6zM7 8h6v4H7zM19 8h5v4h-5zM1 13h6v4H1zM13 13h6v4h-6zM7 18h6v4H7zM19 18h5v4h-5z" fill="#82371d" /></>],
  ["Sticky Notes", true, <><path d="M1 1h22v12L13 23H1z" fill="#3b3b3b" /><path d="M12 12h11L12 23z" fill="#fbd80b" /><path d="M23 12v11H12z" fill="#444" /></>],
  ["ScreenPal", true, <><circle cx="12" cy="12" r="12" fill="#2857ad" /><path d="M5 12a7 7 0 0 0 14 0" stroke="#fff" strokeWidth="3" /><circle cx="12" cy="11.500" r="3" fill="#fff" /><circle cx="6" cy="6.500" r="2" stroke="#fff" strokeDasharray="1 1" /><circle cx="12" cy="4" r="2" stroke="#fff" strokeDasharray="1 1" /><circle cx="18" cy="6.500" r="2" stroke="#fff" strokeDasharray="1 1" /></>],
];

const ChromeMark = () => (
  <span className="relative flex size-9 items-center justify-center rounded bg-white/60">
    <svg viewBox="0 0 24 24" className="size-6" fill="none" aria-hidden="true">
      <circle cx="12" cy="12" r="12" fill="#fbc116" />
      <path d="M12 12 1.600 6A12 12 0 0 0 12 24l5.200-9Z" fill="#2da14d" />
      <path d="M1.600 6A12 12 0 0 1 22.400 6H12V12H5Z" fill="#e33b2e" />
      <circle cx="12" cy="12" r="5.500" fill="#fff" />
      <circle cx="12" cy="12" r="4.300" fill="#2d75e8" />
    </svg>
    <span className="absolute right-0 top-0.5 flex size-4 items-center justify-center rounded-full bg-[#0a8067] text-[10px] text-white">Z</span>
  </span>
);

const Taskbar = () => (
  <footer className="flex h-12 shrink-0 items-center border-t border-[#b5b5b5] bg-[#dadada] bg-[linear-gradient(90deg,#dadada_30%,#f3e4d3_39%,#dde2e6_46%,#e5e1de_52%,#f2e3d0_57%,#e8e0d6_61%,#dadada_72%)] pl-[121px] pr-5">
    <button aria-label="Start" className="flex w-11 justify-center"><A24><path d="M0.500 0.500h11v11H.5zM12.500 .5h11v11h-11zM.5 12.500h11v11H.5zM12.500 12.500h11v11h-11z" fill="#1489dc" /><path d="M.5 .5h11v11H.5z" fill="#38b8ef" /></A24></button>
    <label className="ml-[5px] mr-0.5 flex h-[30px] w-[218px] items-center rounded-full border border-[#e6e6e6] bg-[#f3f3f3] pl-2.5">
      <Search size={16} strokeWidth={2.200} />
      <input aria-label="Search" placeholder="Search" className="ml-2.5 w-32 bg-transparent text-[13px] outline-none placeholder:text-[#666]" />
    </label>
    {TASK_APPS.map(([label, open, art]) => (
      <button key={label} aria-label={label} className="relative flex h-[47px] w-11 items-center justify-center">
        {art ? <A24>{art}</A24> : <ChromeMark />}
        {open && <span className={`absolute bottom-[3px] h-[3px] rounded-full ${art ? "w-1.5 bg-[#857f78]" : "w-4 bg-[#1470bd]"}`} />}
      </button>
    ))}
    <div className="ml-auto flex items-center text-[#222]">
      <button aria-label="Show hidden icons"><ChevronUp size={16} /></button>
      <button aria-label="OneDrive" className="ml-[15px]">
        <Svg box={18} className="size-[18px]"><path d="M4 14Q.5 13 1 9.500 1.500 7 4 7 6 2 11 3q3 1 3.500 4 3 .5 3 3.500 0 3.500-3 3.500z" fill="#1d7fe3" stroke="none" /><rect x="8" y="8" width="9" height="9" rx="3" fill="#35a3f5" stroke="#fff" strokeWidth=".6" /><path d="M10 11h5M10 14h5" stroke="#fff" strokeWidth="1.300" /></Svg>
      </button>
      <button aria-label="Microphone" className="ml-3.5 text-[#24508f]"><Mic size={17} strokeWidth={1.800} /></button>
      <button aria-label="Network, volume and battery" className="ml-[15px] flex items-center gap-2">
        <Wifi size={17} strokeWidth={2} />
        <Svg box={16} className="size-4"><path d="M1 5.500h3L8 2v12l-4-3.500H1zM10 6q1.500 2 0 4" strokeWidth="1.300" /><path d="M12 4.500q3 3.500 0 7" stroke="#999" /></Svg>
        <Svg box={16} className="size-4"><path d="M1 4.500h12v8.500H1zM15 7v3.500" strokeWidth="1.500" /><path d="M5 6.500h6.500v5H3V9z" fill="#222" stroke="none" /><path d="M4 0 1 5h2.500L2.500 8 6 3.500H4z" fill="#222" stroke="none" /></Svg>
      </button>
      <div className="ml-3.5 text-right text-xs leading-4">
        <div>7:21 AM</div>
        <div>1/29/2026</div>
      </div>
    </div>
  </footer>
);

export default function App() {
  return (
    <div className="flex h-screen flex-col overflow-hidden bg-white font-[Open_Sans,sans-serif]">
      <TabStrip />
      <AddressBar />
      <BookmarksBar />
      <AppHeader />
      <div className="flex min-h-0 flex-1 font-[Roboto,sans-serif]">
        <LeftRail />
        <div className="flex min-w-0 flex-1 flex-col">
          <Toolbar />
          <div className="flex min-h-0 flex-1">
            <FeaturePanel />
            <Canvas />
          </div>
          <StudioTabs />
        </div>
      </div>
      <Taskbar />
    </div>
  );
}
